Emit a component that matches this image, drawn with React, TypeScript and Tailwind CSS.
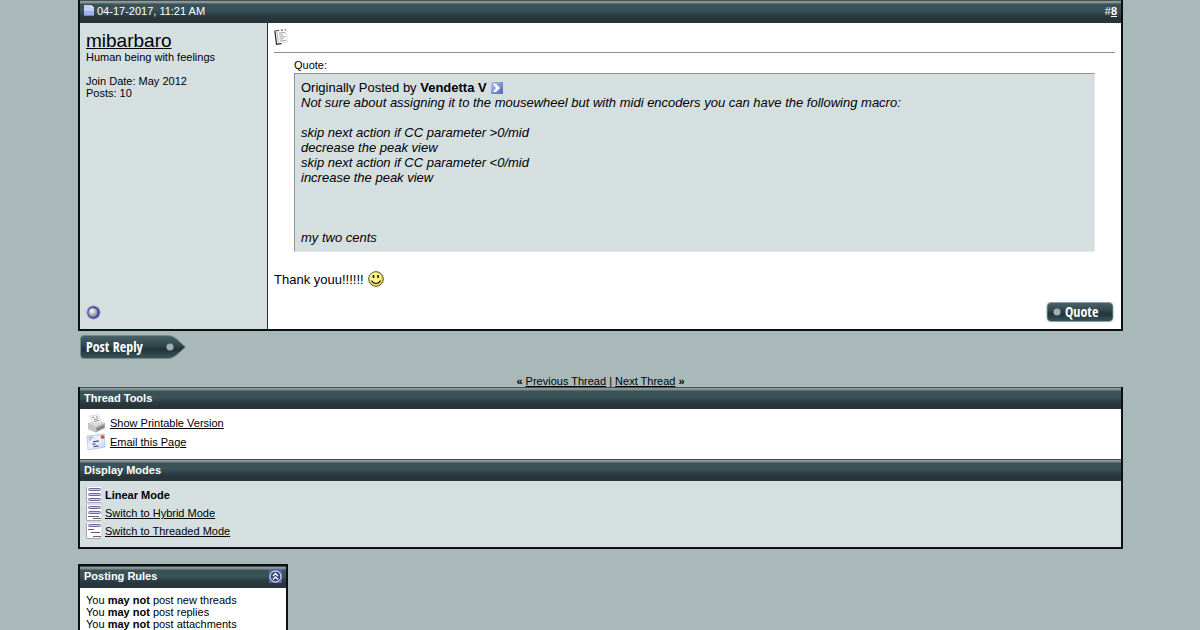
import type { ReactNode } from "react";

const headerBar =
  "bg-[linear-gradient(to_bottom,#435153_0px,#435153_1px,#929e9e_1px,#7d8a8b_3px,#3b5156_4px,#3a5358_10px,#2e4248_14px,#283439_18px,#26363a_100%)] text-white";

function PostStatusIcon() {
  return (
    <svg width="10" height="11" viewBox="0 0 10 11" aria-hidden="true">
      <path d="M0 0h7l3 3v8H0z" fill="#9fb0e4" />
      <path d="M0 0h7l3 3v3L0 6z" fill="#c3cdf3" />
      <path d="M7 0v3h3z" fill="#eef2ff" />
      <path d="M0 10h10v1H0z" fill="#7085c4" />
    </svg>
  );
}

function PostIcon() {
  return (
    <svg width="16" height="16" viewBox="0 0 16 16" aria-hidden="true">
      <path d="M1 1.500L12 .8 13.500 13 3 15z" fill="#fdfdfd" stroke="#ccc" strokeWidth=".6" />
      <path d="M.8 1.500L2.500 15.300l5-.7" fill="none" stroke="#26292d" strokeWidth="1.200" />
      <path d="M2.800 1.800l1.600 12" stroke="#9a9a9a" strokeWidth=".7" />
      <path d="M2 1.500h3M7 1.200h2M11 .8h1" stroke="#555" />
      <path d="M5 4l6-.5M5 6l4-.3M5.500 8l6-.5M5.700 10l4-.3M6 12l6-.6" stroke="#999" strokeWidth=".9" />
    </svg>
  );
}

function ViewPostIcon() {
  return (
    <svg width="12" height="12" viewBox="0 0 12 12" aria-hidden="true">
      <defs>
        <linearGradient id="viewpost" x1="0" y1="0" x2="1" y2="1">
          <stop offset="0" stopColor="#b9c6f0" />
          <stop offset="1" stopColor="#4c65b5" />
        </linearGradient>
      </defs>
      <path d="M0 0h12v12H0z" fill="url(#viewpost)" />
      <path d="M2 2h3l4 4-4 4H2l3-4z" fill="#fff" />
    </svg>
  );
}

function Smiley() {
  return (
    <svg width="16" height="16" viewBox="0 0 16 16" aria-hidden="true">
      <circle cx="8" cy="8" r="7.300" fill="#ece35a" stroke="#4d4a25" />
      <circle cx="7" cy="7" r="5.500" fill="#fbf68b" />
      <path d="M5.500 4v3M10 4v3" stroke="#111" strokeWidth="1.600" />
      <path d="M3.500 9.500c2 4 7 4 9 0" fill="none" stroke="#222" strokeWidth="1.200" />
    </svg>
  );
}

function OfflineIcon() {
  return (
    <svg width="15" height="15" viewBox="0 0 15 15" aria-hidden="true">
      <defs>
        <radialGradient id="offline" cx=".4" cy=".35" r=".6">
          <stop offset="0" stopColor="#fff" />
          <stop offset="1" stopColor="#8d8b9b" />
        </radialGradient>
      </defs>
      <circle cx="7.500" cy="7.500" r="7" fill="#8b92cf" />
      <circle cx="7.500" cy="7.500" r="5.900" fill="#45488e" />
      <circle cx="7" cy="7.500" r="4.500" fill="url(#offline)" />
    </svg>
  );
}

function PrinterIcon() {
  return (
    <svg width="20" height="19" viewBox="0 0 20 19" aria-hidden="true">
      <path d="M4 2l8-1.500 4 8-8 2z" fill="#f7f7f7" stroke="#c4c4c4" strokeWidth=".6" />
      <path d="M6 3.500l2-.4M10 2.800h1.500M8 5.500l4-.8M8 7.500l5-1" stroke="#8a8a8a" />
      <path d="M2 9l4-1 2 2 7-2 4 1v5l-9 4.500L2 15z" fill="#a8a8a8" />
      <path d="M2 9l4-1 2 2 7-2 4 1-9 4z" fill="#dedede" />
      <path d="M2 9l8 4v5.500L2 15z" fill="#c5c5c5" />
      <path d="M11 14.500l7-3v2l-7 3z" fill="#7c7c7c" />
    </svg>
  );
}

function EmailIcon() {
  return (
    <svg width="20" height="18" viewBox="0 0 20 18" aria-hidden="true">
      <defs>
        <linearGradient id="envelope" x1="0" y1="0" x2="1" y2="1">
          <stop offset="0" stopColor="#c5d4f5" />
          <stop offset=".5" stopColor="#f3f6ff" />
          <stop offset="1" stopColor="#b5c7ee" />
        </linearGradient>
      </defs>
      <path d="M1 3l17.500-2L19 14 2 17z" fill="url(#envelope)" stroke="#b3c2e6" strokeWidth=".8" />
      <path d="M3 5l4-.5M3 7l2-.3" stroke="#8b97b8" strokeWidth=".9" />
      <path d="M7 8.800l6-1M6.500 11.300l3-.4M7.500 13.600l5-.8" stroke="#4b5778" strokeWidth="1.200" />
      <circle cx="16.500" cy="4" r="1.900" fill="#e4512f" />
    </svg>
  );
}

function ModeIcon({ mode }: { mode: "linear" | "hybrid" | "threaded" }) {
  return (
    <svg width="15" height="16" viewBox="0 0 15 16" aria-hidden="true">
      <path d="M0 0h15v16H0z" fill="#fff" />
      <path d="M.5 0v15.500H15" fill="none" stroke="#aaa5ad" />
      <g fill="#cfcdec" stroke="#6c68a0">
        <rect x="2.500" y="1.500" width="12" height="2" rx="1" />
        {mode !== "threaded" && <rect x="2.500" y="6.500" width="12" height="2" rx="1" />}
        {mode === "linear" && <rect x="2.500" y="11.500" width="12" height="2" rx="1" />}
      </g>
      {mode === "hybrid" && <path d="M2 11.500h11M7 13.500h8" stroke="#69656d" />}
      {mode === "threaded" && <path d="M2 6.500h6M5 9.500h9M7 13.500h8" stroke="#75556a" />}
    </svg>
  );
}

function CollapseIcon() {
  return (
    <svg width="13" height="13" viewBox="0 0 13 13" aria-hidden="true">
      <path d="M0 0h13v13H0z" fill="#5468a5" />
      <circle cx="6.500" cy="6.500" r="5.500" fill="#34477f" stroke="#fff" />
      <path d="M4 6l2.500-2.500L9 6M4 9.500L6.500 7 9 9.500" fill="none" stroke="#fff" strokeWidth="1.300" />
    </svg>
  );
}

function QuoteButton() {
  return (
    <a href="#quote" aria-label="Quote">
      <svg width="70" height="22" viewBox="0 0 70 22">
        <defs>
          <linearGradient id="btn" x1="0" y1="0" x2="0" y2="1">
            <stop offset="0" stopColor="#4a6368" />
            <stop offset=".45" stopColor="#30464b" />
            <stop offset=".6" stopColor="#20343a" />
            <stop offset="1" stopColor="#3b555a" />
          </linearGradient>
        </defs>
        <rect x="2" y="1.500" width="66" height="19" rx="4" fill="url(#btn)" stroke="#8ba1a3" />
        <circle cx="12" cy="11" r="3.500" fill="#a4adaf" />
        <text
          x="20"
          y="16"
          fill="#fff"
          className="font-['Liberation_Sans_Narrow','Open_Sans_Condensed','Roboto_Condensed','Liberation_Sans',sans-serif] text-[14px] font-bold"
        >
          Quote
        </text>
      </svg>
    </a>
  );
}

function PostReplyButton() {
  return (
    <a href="#reply" aria-label="Post Reply">
      <svg width="110" height="26" viewBox="0 0 110 26">
        <path
          d="M6 1.500h84q4 0 8 3l9.500 8.500-9.500 8.500q-4 3-8 3H6q-3.500 0-3.500-3.500V5q0-3.500 3.500-3.500z"
          fill="url(#btn)"
          stroke="#748b8d"
        />
        <circle cx="92" cy="13" r="3.500" fill="#a4adaf" />
        <text
          x="8"
          y="18"
          fill="#fff"
          className="font-['Liberation_Sans_Narrow','Open_Sans_Condensed','Roboto_Condensed','Liberation_Sans',sans-serif] text-[14px] font-bold"
        >
          Post Reply
        </text>
      </svg>
    </a>
  );
}

function Rule({ children }: { children: ReactNode }) {
  return (
    <li>
      You <b>may not</b> {children}
    </li>
  );
}

export default function App() {
  return (
    <main className="flex h-screen flex-col overflow-hidden bg-[#a9b8b8] pr-[77px] pl-[78px] font-['Liberation_Sans',Arial,sans-serif] text-[11px] leading-3 text-black">
      <article className="border-x-2 border-b-2 border-[#0b1012]">
        <header className={`flex h-[23px] items-center justify-between px-1 pb-0.5 ${headerBar}`}>
          <span className="flex items-center gap-[3px]">
            <PostStatusIcon />
            04-17-2017, 11:21 AM
          </span>
          <span>
            #
            <a href="#post8" className="font-bold underline">
              8
            </a>
          </span>
        </header>
        <div className="flex">
          <section className="flex w-[188px] shrink-0 flex-col border-r border-[#283439] bg-[#d5dfe0] px-1.5 pt-[7px] pb-[9px]">
            <a href="#user" className="text-[19px] leading-[21px] underline">
              mibarbaro
            </a>
            <p>Human being with feelings</p>
            <p className="mt-3">Join Date: May 2012</p>
            <p>Posts: 10</p>
            <span className="mt-auto">
              <OfflineIcon />
            </span>
          </section>
          <section className="flex-1 bg-white px-1.5 py-1.5 text-[13px] leading-[15px]">
            <div className="border-b border-[#8c8c8c] pb-[7px]">
              <PostIcon />
            </div>
            <div className="mx-5 mt-[5px]">
              <p className="text-[11px]">Quote:</p>
              <blockquote className="border border-[#8c9596] border-r-[#e4e9e9] border-b-[#e4e9e9] bg-[#d5dfe0] p-1.5">
                <p className="flex items-center gap-1">
                  <span>
                    Originally Posted by <b>Vendetta V</b>
                  </span>
                  <a href="#original" aria-label="View Post">
                    <ViewPostIcon />
                  </a>
                </p>
                <div className="italic">
                  <p>
                    Not sure about assigning it to the mousewheel but with midi encoders you can have the
                    following macro:
                  </p>
                  <p className="mt-[15px]">skip next action if CC parameter &gt;0/mid</p>
                  <p>decrease the peak view</p>
                  <p>skip next action if CC parameter &lt;0/mid</p>
                  <p>increase the peak view</p>
                  <p className="mt-[45px]">my two cents</p>
                </div>
              </blockquote>
            </div>
            <p className="mt-[19px] flex items-center gap-1">
              Thank youu!!!!!! <Smiley />
            </p>
            <div className="mt-3.5 flex justify-end">
              <QuoteButton />
            </div>
          </section>
        </div>
      </article>

      <div className="mt-[3px]">
        <PostReplyButton />
      </div>

      <nav className="mt-[15px] text-center">
        <b>«</b>{" "}
        <a href="#previous" className="underline">
          Previous Thread
        </a>{" "}
        |{" "}
        <a href="#next" className="underline">
          Next Thread
        </a>{" "}
        <b>»</b>
      </nav>

      <section className="border-x-2 border-b-2 border-[#0b1012]">
        <h2 className={`flex h-[22px] items-center px-1 font-bold ${headerBar}`}>Thread Tools</h2>
        <ul className="flex flex-col gap-px bg-white px-1.5 pt-[5px] pb-2">
          <li className="flex h-[18px] items-center gap-1">
            <PrinterIcon />
            <a href="#print" className="underline">
              Show Printable Version
            </a>
          </li>
          <li className="flex h-[18px] items-center gap-1">
            <EmailIcon />
            <a href="#email" className="underline">
              Email this Page
            </a>
          </li>
        </ul>
        <h2 className={`flex h-[22px] items-center px-1 font-bold ${headerBar}`}>Display Modes</h2>
        <ul className="bg-[#d5dfe0] px-1.5 pt-[5px] pb-[7px]">
          <li className="flex h-[18px] items-center gap-1">
            <ModeIcon mode="linear" />
            <b>Linear Mode</b>
          </li>
          <li className="flex h-[18px] items-center gap-1">
            <ModeIcon mode="hybrid" />
            <a href="#hybrid" className="underline">
              Switch to Hybrid Mode
            </a>
          </li>
          <li className="flex h-[18px] items-center gap-1">
            <ModeIcon mode="threaded" />
            <a href="#threaded" className="underline">
              Switch to Threaded Mode
            </a>
          </li>
        </ul>
      </section>

      <section className="mt-[15px] w-[210px] border-2 border-[#0b1012] bg-white">
        <h2 className={`flex h-[22px] items-center justify-between px-1 pb-0.5 font-bold ${headerBar}`}>
          Posting Rules
          <button type="button" aria-label="Collapse posting rules">
            <CollapseIcon />
          </button>
        </h2>
        <ul className="p-1.5">
          <Rule>post new threads</Rule>
          <Rule>post replies</Rule>
          <Rule>post attachments</Rule>
        </ul>
      </section>
    </main>
  );
}
